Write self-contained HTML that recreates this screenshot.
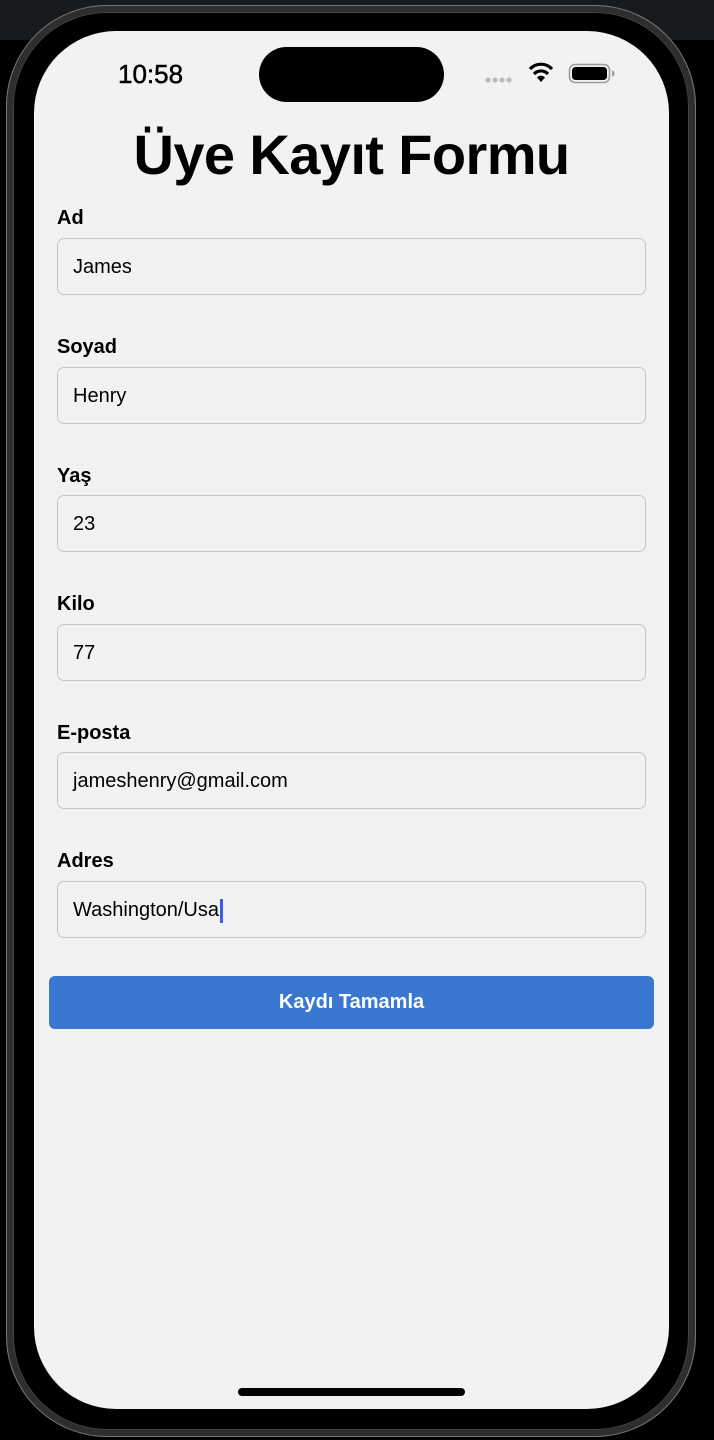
<!DOCTYPE html>
<html><head><meta charset="utf-8"><style>
*{margin:0;padding:0;box-sizing:border-box}
body{width:714px;height:1440px;background:#000;position:relative;overflow:hidden;font-family:"Liberation Sans",sans-serif}
.topbg{position:absolute;left:0;top:0;width:714px;height:40px;background:#181b1e}
.frame{position:absolute;left:7px;top:6px;width:688px;height:1430px;border-radius:100px;background:#000;border:6px solid #2e2e2e;box-shadow:inset 0 0 0 1px #444, 0 0 0 1px #777}
.screen{position:absolute;left:34px;top:31px;width:635px;height:1378px;border-radius:82px;background:#f2f2f2;overflow:hidden}
.island{position:absolute;left:225px;top:16px;width:185px;height:55px;border-radius:28px;background:#000}
.time{position:absolute;left:84px;top:28px;font-size:26px;color:#000;-webkit-text-stroke:0.5px #000}
.title{position:absolute;left:0;width:635px;top:91px;text-align:center;font-size:56px;font-weight:bold;letter-spacing:-0.6px;color:#000}
.label{position:absolute;left:23px;font-size:20px;font-weight:bold;color:#000}
.inp{position:absolute;left:23px;width:589px;height:57px;border:1.5px solid #c6c6c6;border-radius:7px;padding-left:15px;line-height:57px;font-size:20px;color:#000}
.btn{position:absolute;left:15px;top:945px;width:605px;height:53px;background:#3a77d0;border-radius:6px;color:#fff;font-weight:bold;font-size:20px;text-align:center;line-height:53px}
.home{position:absolute;left:204px;top:1357px;width:227px;height:8px;border-radius:4px;background:#000}
.caret{display:inline-block;width:3px;height:24px;background:#3a5ff0;vertical-align:middle;margin-left:1px}
</style></head><body>
<div class="topbg"></div>
<div class="frame"></div>
<div class="screen">
<div class="island"></div>
<div class="time">10:58</div>
<svg style="position:absolute;left:406px;top:28px" width="180" height="30">
<g fill="#bbb"><circle cx="48" cy="21" r="2.6"/><circle cx="55" cy="21" r="2.6"/><circle cx="62" cy="21" r="2.6"/><circle cx="69" cy="21" r="2.6"/></g>
<path d="M90 10 A15 15 0 0 1 112 10" stroke="#000" stroke-width="3.2" fill="none"/>
<path d="M94 15 A9.5 9.5 0 0 1 108 15" stroke="#000" stroke-width="3.2" fill="none"/>
<path d="M101 23 L97 18.5 A5.5 5.5 0 0 1 105 18.5 Z" fill="#000"/>
<rect x="129.5" y="5.5" width="40" height="18" rx="5.5" fill="none" stroke="#999" stroke-width="1.5"/>
<rect x="132" y="8" width="35" height="13" rx="3.5" fill="#000"/>
<path d="M172 11.5 a2.5 3 0 0 1 0 6z" fill="#999"/>
</svg>
<div class="title">Üye Kayıt Formu</div>
<div class="label" style="top:176px">Ad</div><div class="inp" style="top:207px">James</div>
<div class="label" style="top:305px">Soyad</div><div class="inp" style="top:336px">Henry</div>
<div class="label" style="top:434px">Yaş</div><div class="inp" style="top:464px">23</div>
<div class="label" style="top:562px">Kilo</div><div class="inp" style="top:593px">77</div>
<div class="label" style="top:691px">E-posta</div><div class="inp" style="top:721px">jameshenry@gmail.com</div>
<div class="label" style="top:819px">Adres</div><div class="inp" style="top:850px">Washington/Usa<span class="caret"></span></div>
<div class="btn">Kaydı Tamamla</div>
<div class="home"></div>
</div>
</body></html>
